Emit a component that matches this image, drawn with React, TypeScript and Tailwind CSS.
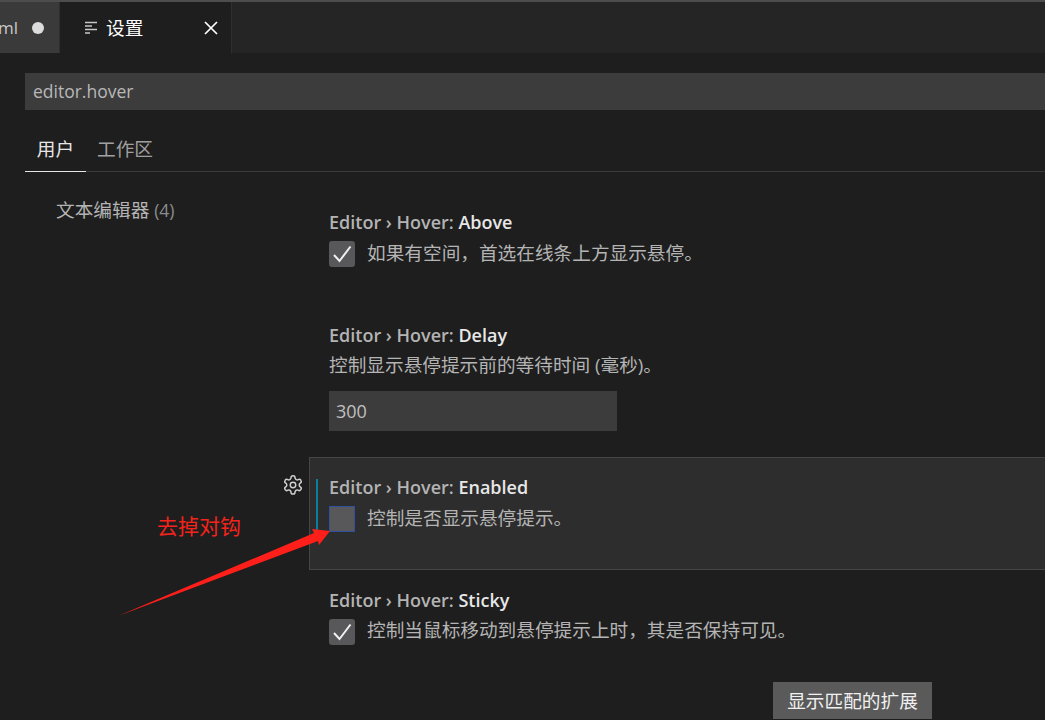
const font = "font-['Open_Sans','Noto_Sans_CJK_SC',sans-serif]"

function Check() {
  return (
    <div className="w-[26px] h-[26px] shrink-0 rounded-[3px] bg-[#58585a] flex items-center justify-center">
      <svg width="22" height="22" viewBox="0 0 22 22" fill="none">
        <path d="M3 12 L8.5 18 L19.5 3.5" stroke="#f0f0f0" strokeWidth="2" />
      </svg>
    </div>
  )
}

function Title({ name }: { name: string }) {
  return (
    <div className="h-[24px] leading-[24px] text-[18px] font-semibold text-[#b4b4b4] whitespace-nowrap">
      Editor › Hover: <span className="text-[#e7e7e7]">{name}</span>
    </div>
  )
}

function Gear() {
  return (
    <svg className="absolute left-[-28px] top-[16px]" width="22" height="22" viewBox="0 0 24 24" fill="none" stroke="#d0d0d0" strokeWidth="1.6">
      <path d="M12.2 2h-.4a2 2 0 0 0-2 2v.2a2 2 0 0 1-1 1.7l-.4.3a2 2 0 0 1-2 0l-.2-.1a2 2 0 0 0-2.7.7l-.2.4a2 2 0 0 0 .7 2.7l.2.1a2 2 0 0 1 1 1.7v.5a2 2 0 0 1-1 1.7l-.2.1a2 2 0 0 0-.7 2.7l.2.4a2 2 0 0 0 2.7.7l.2-.1a2 2 0 0 1 2 0l.4.3a2 2 0 0 1 1 1.7v.2a2 2 0 0 0 2 2h.4a2 2 0 0 0 2-2v-.2a2 2 0 0 1 1-1.7l.4-.3a2 2 0 0 1 2 0l.2.1a2 2 0 0 0 2.7-.7l.2-.4a2 2 0 0 0-.7-2.7l-.2-.1a2 2 0 0 1-1-1.7v-.5a2 2 0 0 1 1-1.7l.2-.1a2 2 0 0 0 .7-2.7l-.2-.4a2 2 0 0 0-2.7-.7l-.2.1a2 2 0 0 1-2 0l-.4-.3a2 2 0 0 1-1-1.7V4a2 2 0 0 0-2-2z" />
      <circle cx="12" cy="12" r="3" />
    </svg>
  )
}

export default function App() {
  return (
    <div className={`relative w-[1045px] h-[720px] overflow-hidden bg-[#1e1e1e] ${font}`}>
      {/* Tab bar */}
      <div className="h-[2px] bg-[#4d4d4d]" />
      <div className="h-[51px] flex bg-[#252526]">
        <div className="relative w-[59px] bg-[#3a3a3a] flex items-center justify-end pr-[15px] overflow-hidden">
          <span className="absolute right-[41px] text-[17px] text-[#c8c8c8]">ml</span>
          <span className="w-[12px] h-[12px] shrink-0 rounded-full bg-[#dcdcdc]" />
        </div>
        <div className="w-[173px] bg-[#1e1e1e] border-x border-[#2f2f2f] flex items-center pl-[25px]">
          <svg width="12" height="13" viewBox="0 0 12 13" fill="none" stroke="#c8c8c8" strokeWidth="1.4">
            <path d="M0 1.5 H12 M0 5 H7 M0 8.5 H12 M0 12 H5" />
          </svg>
          <span className="ml-[9px] text-[18.67px] text-white">设置</span>
          <svg className="ml-[61px]" width="14" height="14" viewBox="0 0 14 14" fill="none" stroke="#ffffff" strokeWidth="1.7">
            <path d="M1 1 L13 13 M13 1 L1 13" />
          </svg>
        </div>
      </div>

      {/* Search */}
      <div className="mt-[20px] ml-[25px] h-[37px] bg-[#3c3c3c] flex items-center pl-[8px] text-[17.5px] text-[#b8b8b8]">
        editor.hover
      </div>

      {/* Scope tabs */}
      <div className="mt-[21px] ml-[25px] h-[41px] border-b border-[#3a3a3a] flex text-[18.67px]">
        <div className="w-[61px] h-[41px] border-b border-[#e6e6e6] text-center leading-[35px] text-[#e6e6e6]">用户</div>
        <div className="ml-[11px] leading-[35px] text-[#a0a0a0]">工作区</div>
      </div>

      <div className="flex">
        {/* Sidebar */}
        <div className="w-[309px] pl-[56px] pt-[25px] text-[18.67px] leading-[26px] text-[#b4b4b4] whitespace-nowrap">
          文本编辑器 <span className="text-[17.5px] text-[#8c8c8c]">(4)</span>
        </div>

        {/* Settings list */}
        <div className="flex-1 min-w-0">
          <div className="pl-[20px] pt-[38px] h-[151px]">
            <Title name="Above" />
            <div className="mt-[7px] flex items-start gap-[12px]">
              <Check />
              <span className="leading-[24px] text-[18.67px] text-[#b4b4b4] whitespace-nowrap">如果有空间，首选在线条上方显示悬停。</span>
            </div>
          </div>

          <div className="pl-[20px] h-[134px]">
            <Title name="Delay" />
            <div className="mt-[5px] h-[26px] leading-[26px] text-[18.67px] text-[#b4b4b4] whitespace-nowrap">控制显示悬停提示前的等待时间 (毫秒)。</div>
            <div className="mt-[13px] w-[288px] h-[40px] bg-[#3c3c3c] flex items-center pl-[7px] text-[18px] text-[#c0c0c0]">300</div>
          </div>

          <div className="relative h-[113px] bg-[#2d2d2d] border border-r-0 border-[#464646] pl-[19px] pt-[17px]">
            <Gear />
            <div className="absolute left-[6px] top-[21px] w-[2px] h-[52px] bg-[#0e7c9c]" />
            <Title name="Enabled" />
            <div className="mt-[7px] flex items-start gap-[12px]">
              <div className="w-[26px] h-[26px] shrink-0 bg-[#58585a] border border-[#2f4f9f]" />
              <span className="leading-[24px] text-[18.67px] text-[#b4b4b4] whitespace-nowrap">控制是否显示悬停提示。</span>
            </div>
          </div>

          <div className="pl-[20px] pt-[18px]">
            <Title name="Sticky" />
            <div className="mt-[7px] flex items-start gap-[12px]">
              <Check />
              <span className="leading-[22px] text-[18.67px] text-[#b4b4b4] whitespace-nowrap">控制当鼠标移动到悬停提示上时，其是否保持可见。</span>
            </div>
            <div className="mt-[37px] ml-[444px] w-[159px] h-[37px] bg-[#5a5a5a] flex items-center justify-center text-[18.67px] text-[#f0f0f0] whitespace-nowrap">
              显示匹配的扩展
            </div>
          </div>
        </div>
      </div>

      {/* Annotation */}
      <div className="absolute left-[157px] top-[512px] text-[21px] leading-[28px] text-[#f5231c] whitespace-nowrap">去掉对钩</div>
      <svg className="absolute left-[110px] top-[520px]" width="225" height="100" viewBox="0 0 225 100" fill="#ff1f1a">
        <path d="M8 96 L204 13 L202 9 L220 11 L209 25 L208 21 Z" />
      </svg>
    </div>
  )
}
